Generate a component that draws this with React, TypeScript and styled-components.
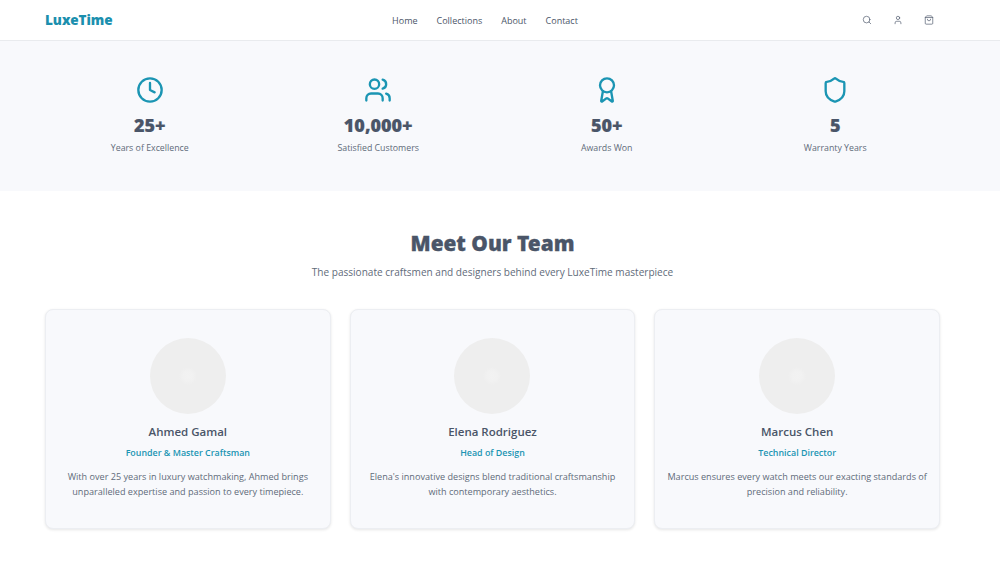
import React from 'react';
import styled, { createGlobalStyle } from 'styled-components';
import { Award, Clock, Search, Shield, ShoppingBag, User, Users } from 'lucide-react';

const GlobalStyle = createGlobalStyle`
  html, body {
    margin: 0;
    padding: 0;
    background: #fff;
    overflow: hidden;
  }
  body {
    font-family: 'Open Sans', 'Noto Sans', sans-serif;
    color: #4a5568;
  }
  * { box-sizing: border-box; }
`;

const stats = [
  { icon: Clock, value: '25+', label: 'Years of Excellence' },
  { icon: Users, value: '10,000+', label: 'Satisfied Customers' },
  { icon: Award, value: '50+', label: 'Awards Won' },
  { icon: Shield, value: '5', label: 'Warranty Years' },
];

const team = [
  {
    name: 'Ahmed Gamal',
    role: 'Founder & Master Craftsman',
    bio: 'With over 25 years in luxury watchmaking, Ahmed brings unparalleled expertise and passion to every timepiece.',
  },
  {
    name: 'Elena Rodriguez',
    role: 'Head of Design',
    bio: "Elena's innovative designs blend traditional craftsmanship with contemporary aesthetics.",
  },
  {
    name: 'Marcus Chen',
    role: 'Technical Director',
    bio: 'Marcus ensures every watch meets our exacting standards of precision and reliability.',
  },
];

const App = () => {
  return (
    <Page>
      <GlobalStyle />
      <Header>
        <Logo>LuxeTime</Logo>
        <Nav>
          <NavLink>Home</NavLink>
          <NavLink>Collections</NavLink>
          <NavLink>About</NavLink>
          <NavLink>Contact</NavLink>
        </Nav>
        <Actions>
          <Search size={10} strokeWidth={1.6} />
          <User size={10} strokeWidth={1.6} />
          <ShoppingBag size={10} strokeWidth={1.6} />
        </Actions>
      </Header>

      <StatsBand>
        {stats.map((stat) => (
          <Stat key={stat.label}>
            <stat.icon size={28} strokeWidth={2} color="#1b95b3" />
            <StatValue>{stat.value}</StatValue>
            <StatLabel>{stat.label}</StatLabel>
          </Stat>
        ))}
      </StatsBand>

      <TeamSection>
        <Title>Meet Our Team</Title>
        <Subtitle>The passionate craftsmen and designers behind every LuxeTime masterpiece</Subtitle>
        <Cards>
          {team.map((member) => (
            <Card key={member.name}>
              <Avatar />
              <Name>{member.name}</Name>
              <Role>{member.role}</Role>
              <Bio>{member.bio}</Bio>
            </Card>
          ))}
        </Cards>
      </TeamSection>
    </Page>
  );
};

const Page = styled.div`
  width: 1000px;
  height: 568px;
  overflow: hidden;
  background: #fff;
`;

const Header = styled.header`
  height: 41px;
  padding: 0 66px 0 45px;
  display: flex;
  align-items: center;
  justify-content: space-between;
  border-bottom: 1px solid #e9ebee;
`;

const Logo = styled.div`
  width: 69px;
  white-space: nowrap;
  font-family: 'Noto Sans', sans-serif;
  font-size: 13.5px;
  font-weight: 900;
  color: #1b8fae;
`;

const Nav = styled.nav`
  display: flex;
  gap: 19px;
  margin-right: 6px;
`;

const NavLink = styled.a`
  font-size: 9px;
  color: #4a5568;
`;

const Actions = styled.div`
  width: 72px;
  display: flex;
  justify-content: flex-end;
  gap: 21px;
  color: #4a5568;
`;

const StatsBand = styled.section`
  height: 150px;
  padding: 35px 60px 0 45px;
  background: #f8f9fc;
  display: grid;
  grid-template-columns: repeat(4, 1fr);
  gap: 19px;
`;

const Stat = styled.div`
  display: flex;
  flex-direction: column;
  align-items: center;
`;

const StatValue = styled.div`
  margin-top: 9px;
  font-family: 'Noto Sans', sans-serif;
  font-size: 18px;
  line-height: 24px;
  font-weight: 900;
  -webkit-text-stroke: 0.2px #4a5568;
  color: #4a5568;
`;

const StatLabel = styled.div`
  margin-top: 5px;
  font-size: 8.8px;
  line-height: 13px;
  color: #5f6b7a;
`;

const TeamSection = styled.section`
  padding: 38px 60px 0 45px;
`;

const Title = styled.h2`
  margin: 0;
  text-align: center;
  font-family: 'Noto Sans', sans-serif;
  font-size: 20.8px;
  line-height: 28px;
  font-weight: 900;
  -webkit-text-stroke: 0.3px #4a5568;
  color: #4a5568;
`;

const Subtitle = styled.p`
  margin: 8px 0 0;
  text-align: center;
  font-size: 10.07px;
  line-height: 14px;
  color: #5f6b7a;
`;

const Cards = styled.div`
  margin-top: 30px;
  display: grid;
  grid-template-columns: repeat(3, 1fr);
  gap: 19px;
`;

const Card = styled.article`
  height: 220px;
  padding: 28px 11px 0;
  background: #f8f9fc;
  border: 1px solid #eceef2;
  border-radius: 8px;
  box-shadow: 0 1px 3px rgba(0, 0, 0, 0.1);
  display: flex;
  flex-direction: column;
  align-items: center;
  text-align: center;
`;

const Avatar = styled.div`
  width: 76px;
  height: 76px;
  border-radius: 50%;
  background: radial-gradient(circle, #f2f2f2 0, #f1f1f1 5px, #eeeeee 9px);
`;

const Name = styled.h3`
  margin: 10px 0 0;
  font-size: 11.5px;
  line-height: 16px;
  font-weight: 600;
  color: #4a5568;
`;

const Role = styled.div`
  margin-top: 6px;
  font-size: 8.9px;
  line-height: 13px;
  font-weight: 600;
  color: #1b95b3;
`;

const Bio = styled.p`
  margin: 10px 0 0;
  font-size: 9.1px;
  line-height: 15px;
  color: #5f6b7a;
`;

export default App;
